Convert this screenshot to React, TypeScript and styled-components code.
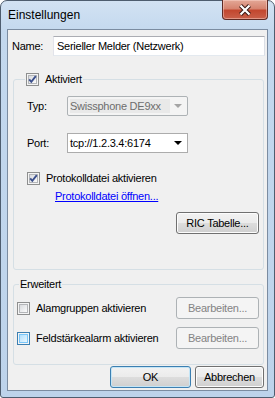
import React from "react";
import styled, {createGlobalStyle} from "styled-components";

const GlobalStyle = createGlobalStyle`
  html, body {
    margin: 0;
    padding: 0;
    background: #ffffff;
  }
  body {
    font-family: "Liberation Sans", Arial, sans-serif;
    font-size: 11px;
    letter-spacing: -0.25px;
    color: #000000;
  }
`;

const CheckMark = () => (
  <svg width="9" height="9" viewBox="0 0 9 9">
    <polyline points="1.2,4.4 3.3,6.8 7.8,1.2" fill="none" stroke="#3b4f8c" strokeWidth="1.9"/>
  </svg>
);

const Check = ({checked, hot}: {checked?: boolean; hot?: boolean}) => (
  <S.CheckBox $hot={hot}>
    <S.CheckInner $hot={hot}>{checked && <CheckMark/>}</S.CheckInner>
  </S.CheckBox>
);

export default function App() {
  return (
    <>
      <GlobalStyle/>
      <S.Window>
        <S.TitleBar>
          <S.Title>Einstellungen</S.Title>
          <S.CloseButton>
            <svg width="14" height="12" viewBox="0 0 14 12">
              <path d="M2.5 1.5 L11.5 10.5 M11.5 1.5 L2.5 10.5" stroke="#3b1a14" strokeWidth="4.2" fill="none"/>
              <path d="M2.5 1.5 L11.5 10.5 M11.5 1.5 L2.5 10.5" stroke="#ffffff" strokeWidth="2.2" fill="none"/>
            </svg>
          </S.CloseButton>
        </S.TitleBar>
        <S.Client>
          <S.NameRow>
            <S.NameLabel>Name:</S.NameLabel>
            <S.TextBox>Serieller Melder (Netzwerk)</S.TextBox>
          </S.NameRow>

          <S.Group $height={198} $top={16}>
            <S.Legend $offset={11}>
              <S.CheckLabel>
                <Check checked/>
                <span>Aktiviert</span>
              </S.CheckLabel>
            </S.Legend>
            <S.GroupBody>
              <S.FieldRow $top={10}>
                <S.FieldLabel>Typ:</S.FieldLabel>
                <S.Combo $disabled>
                  <S.ComboText $disabled>Swissphone DE9xx</S.ComboText>
                  <S.Arrow $disabled/>
                </S.Combo>
              </S.FieldRow>
              <S.FieldRow $top={17}>
                <S.FieldLabel>Port:</S.FieldLabel>
                <S.Combo>
                  <S.ComboText>tcp://1.2.3.4:6174</S.ComboText>
                  <S.Arrow/>
                </S.Combo>
              </S.FieldRow>
              <S.CheckRow $top={18} $indent={13}>
                <S.CheckLabel>
                  <Check checked/>
                  <span>Protokolldatei aktivieren</span>
                </S.CheckLabel>
              </S.CheckRow>
              <S.Link>Protokolldatei öffnen...</S.Link>
              <S.ButtonRow>
                <S.Button $width={83}>RIC Tabelle...</S.Button>
              </S.ButtonRow>
            </S.GroupBody>
          </S.Group>

          <S.Group $height={88} $top={7}>
            <S.Legend $offset={5}>
              <S.LegendText>Erweitert</S.LegendText>
            </S.Legend>
            <S.GroupBody>
              <S.OptionRow $top={6}>
                <S.CheckLabel>
                  <Check/>
                  <span>Alamgruppen aktivieren</span>
                </S.CheckLabel>
                <S.Button $width={83} $disabled>Bearbeiten...</S.Button>
              </S.OptionRow>
              <S.OptionRow $top={8}>
                <S.CheckLabel>
                  <Check hot/>
                  <span>Feldstärkealarm aktivieren</span>
                </S.CheckLabel>
                <S.Button $width={83} $disabled>Bearbeiten...</S.Button>
              </S.OptionRow>
            </S.GroupBody>
          </S.Group>

          <S.Footer>
            <S.Button $width={81} $default>OK</S.Button>
            <S.Button $width={69}>Abbrechen</S.Button>
          </S.Footer>
        </S.Client>
      </S.Window>
    </>
  );
}

const S = {
  Window: styled.div`
    box-sizing: border-box;
    width: 275px;
    height: 398px;
    display: flex;
    flex-direction: column;
    padding: 0 6px 6px 6px;
    border: 1px solid #4e5d6f;
    border-radius: 7px 7px 3px 3px;
    background: linear-gradient(180deg, #d2e2f3 0%, #c3d8ee 8%, #bdd3eb 100%);
  `,
  TitleBar: styled.div`
    height: 28px;
    flex: 0 0 28px;
    display: flex;
    justify-content: space-between;
    align-items: flex-start;
  `,
  Title: styled.div`
    padding: 7px 0 0 1px;
    font-family: "Liberation Sans", Arial, sans-serif;
    font-size: 12px;
    letter-spacing: 0;
    line-height: 14px;
    color: #000000;
  `,
  CloseButton: styled.div`
    box-sizing: border-box;
    width: 46px;
    height: 20px;
    margin-top: -1px;
    display: flex;
    align-items: center;
    justify-content: center;
    border: 1px solid #5e2b25;
    border-top: none;
    border-radius: 0 0 4px 4px;
    background: linear-gradient(180deg, #e3a897 0%, #d68470 45%, #c2472f 55%, #c9604a 100%);
    box-shadow: inset 0 0 0 1px rgba(255, 220, 210, 0.45);
  `,
  Client: styled.div`
    flex: 1;
    display: flex;
    flex-direction: column;
    background: #f0f0f0;
    border: 1px solid #7b8ca1;
  `,
  NameRow: styled.div`
    display: flex;
    align-items: center;
    height: 20px;
    margin-top: 6px;
    padding-left: 4px;
  `,
  NameLabel: styled.div`
    flex: 0 0 41px;
  `,
  TextBox: styled.div`
    box-sizing: border-box;
    width: 212px;
    height: 20px;
    padding-left: 3px;
    display: flex;
    align-items: center;
    background: #ffffff;
    border: 1px solid;
    border-color: #abadb3 #dbdfe6 #e3e9ef #e2e3ea;
  `,
  Group: styled.fieldset<{ $height: number; $top: number }>`
    box-sizing: border-box;
    height: ${({$height}) => $height}px;
    margin: ${({$top}) => $top}px 3px 0 5px;
    padding: 0;
    min-width: 0;
    border: 1px solid #d5dfe5;
    border-radius: 3px;
    display: flex;
    flex-direction: column;
  `,
  Legend: styled.legend<{ $offset: number }>`
    margin-left: ${({$offset}) => $offset}px;
    padding: 0 1px;
    height: 14px;
    line-height: 14px;
  `,
  LegendText: styled.span`
    display: block;
    line-height: 14px;
  `,
  GroupBody: styled.div`
    display: flex;
    flex-direction: column;
  `,
  FieldRow: styled.div<{ $top: number }>`
    display: flex;
    align-items: center;
    margin-top: ${({$top}) => $top}px;
    padding-left: 13px;
  `,
  FieldLabel: styled.div`
    flex: 0 0 40px;
  `,
  Combo: styled.div<{ $disabled?: boolean }>`
    box-sizing: border-box;
    width: 121px;
    height: 20px;
    display: flex;
    align-items: stretch;
    background: ${({$disabled}) => ($disabled ? "#f4f4f4" : "#ffffff")};
    border: 1px solid ${({$disabled}) => ($disabled ? "#adb2b5" : "#acacac")};
    border-radius: ${({$disabled}) => ($disabled ? "2px" : "0")};
  `,
  ComboText: styled.div<{ $disabled?: boolean }>`
    flex: 1;
    display: flex;
    align-items: center;
    margin: ${({$disabled}) => ($disabled ? "2px 0 2px 2px" : "0")};
    padding-left: ${({$disabled}) => ($disabled ? "0" : "2px")};
    background: ${({$disabled}) => ($disabled ? "#e9e9e9" : "transparent")};
    color: ${({$disabled}) => ($disabled ? "#6d6d6d" : "#000000")};
  `,
  Arrow: styled.div<{ $disabled?: boolean }>`
    flex: 0 0 17px;
    position: relative;
    &::after {
      content: "";
      position: absolute;
      left: 4px;
      top: 7px;
      border-left: 4px solid transparent;
      border-right: 4px solid transparent;
      border-top: 4px solid ${({$disabled}) => ($disabled ? "#a5a5a5" : "#000000")};
    }
  `,
  CheckRow: styled.div<{ $top: number; $indent: number }>`
    display: flex;
    margin-top: ${({$top}) => $top}px;
    padding-left: ${({$indent}) => $indent}px;
  `,
  CheckLabel: styled.label`
    display: flex;
    align-items: center;
    gap: 6px;
    height: 14px;
    line-height: 14px;
    white-space: nowrap;
  `,
  CheckBox: styled.span<{ $hot?: boolean }>`
    box-sizing: border-box;
    flex: 0 0 13px;
    width: 13px;
    height: 13px;
    padding: 1px;
    border: 1px solid ${({$hot}) => ($hot ? "#3c7fb1" : "#8e8f8f")};
    background: #f4f4f4;
  `,
  CheckInner: styled.span<{ $hot?: boolean }>`
    box-sizing: border-box;
    display: flex;
    align-items: center;
    justify-content: center;
    width: 9px;
    height: 9px;
    border: 1px solid ${({$hot}) => ($hot ? "#79c6f9" : "#b4b6b9")};
    background: ${({$hot}) =>
      $hot ? "linear-gradient(135deg, #b1dffd 0%, #e9f7fe 100%)" : "linear-gradient(135deg, #d9dbde 0%, #fbfbfb 100%)"};
    & svg {
      flex: 0 0 9px;
    }
  `,
  Link: styled.div`
    margin: 4px 0 0 41px;
    line-height: 14px;
    color: #0000ff;
    text-decoration: underline;
  `,
  ButtonRow: styled.div`
    display: flex;
    justify-content: flex-end;
    margin-top: 9px;
    padding-right: 4px;
  `,
  OptionRow: styled.div<{ $top: number }>`
    display: flex;
    align-items: center;
    justify-content: space-between;
    margin-top: ${({$top}) => $top}px;
    padding: 0 4px 0 3px;
  `,
  Button: styled.div<{ $width: number; $disabled?: boolean; $default?: boolean }>`
    box-sizing: border-box;
    width: ${({$width}) => $width}px;
    height: 22px;
    display: flex;
    align-items: center;
    justify-content: center;
    border-radius: 3px;
    white-space: nowrap;
    user-select: none;
    border: 1px solid ${({$disabled, $default}) => ($disabled ? "#adb2b5" : $default ? "#3c7fb1" : "#707070")};
    color: ${({$disabled}) => ($disabled ? "#838383" : "#000000")};
    background: ${({$disabled}) =>
      $disabled ? "#f4f4f4" : "linear-gradient(180deg, #f2f2f2 0%, #ebebeb 50%, #dddddd 50%, #cfcfcf 100%)"};
    box-shadow: ${({$disabled, $default}) =>
      $disabled ? "none" : $default ? "inset 0 0 0 1px #c4e5f6" : "inset 0 0 0 1px #fcfcfc"};
  `,
  Footer: styled.div`
    display: flex;
    justify-content: flex-end;
    gap: 4px;
    margin-top: 1px;
    padding-right: 3px;
  `,
};
